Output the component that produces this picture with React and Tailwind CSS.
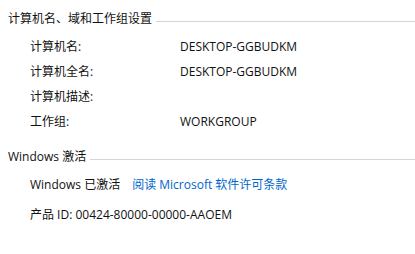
import React from 'react';

const font = { fontFamily: '"Segoe UI", "Open Sans", "Noto Sans CJK SC", sans-serif' };

const Titulo = ({ texto }) => (
  <div className="flex items-center h-4 pl-2">
    <span className="whitespace-nowrap leading-4">{texto}</span>
    <div className="flex-1 h-px bg-[#d5d5d5] ml-1 mt-1" />
  </div>
);

const Linha = ({ rotulo, valor }) => (
  <div className="flex h-[25px] items-center pl-[30px]">
    <span className="w-[150px] whitespace-nowrap">{rotulo}</span>
    <span className="whitespace-nowrap">{valor}</span>
  </div>
);

export default function App() {
  return (
    <div className="w-[415px] h-[254px] bg-white text-[12px] text-[#111] pt-[11px] overflow-hidden" style={font}>
      <Titulo texto="计算机名、域和工作组设置" />
      <div className="mt-[7px]">
        <Linha rotulo="计算机名:" valor="DESKTOP-GGBUDKM" />
        <Linha rotulo="计算机全名:" valor="DESKTOP-GGBUDKM" />
        <Linha rotulo="计算机描述:" valor="" />
        <Linha rotulo="工作组:" valor="WORKGROUP" />
      </div>

      <div className="mt-[15px]">
        <Titulo texto="Windows 激活" />
      </div>
      <div className="mt-[7px] flex h-[25px] items-center pl-[30px] whitespace-nowrap">
        <span>Windows 已激活</span>
        <span className="ml-3 text-[#0066cc]">阅读 Microsoft 软件许可条款</span>
      </div>
      <div className="mt-[5px] flex h-[25px] items-center pl-[30px] whitespace-nowrap">
        产品 ID: 00424-80000-00000-AAOEM
      </div>
    </div>
  );
}
